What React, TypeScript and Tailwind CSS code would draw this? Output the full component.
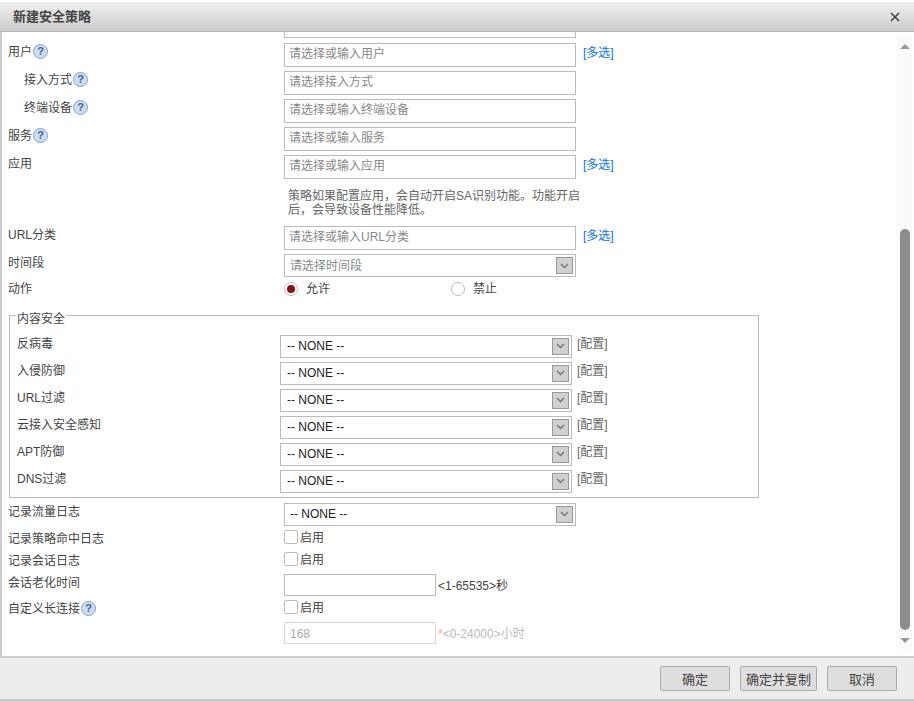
const FONT = { fontFamily: '"Liberation Sans", "Noto Sans CJK SC", sans-serif' }

function Help() {
  return (
    <span className="ml-px inline-flex h-[15px] w-[15px] shrink-0 items-center justify-center rounded-full border border-[#7ea6dc] bg-[#cfdcee] text-[11px] leading-none font-bold text-[#3c659c]">
      ?
    </span>
  )
}

function Chevron() {
  return (
    <span className="flex h-[17px] w-[17px] shrink-0 items-center justify-center border border-[#999] bg-[#d0d0d0]">
      <svg width="9" height="6" viewBox="0 0 9 6" fill="none">
        <path d="M1 1l3.5 3.5L8 1" stroke="#777" strokeWidth="1.5" />
      </svg>
    </span>
  )
}

function TextBox({ text }: { text: string }) {
  return (
    <div className="flex h-[24px] w-[292px] items-center border border-[#bbb] pb-[2px] pl-[4px] text-[12px] text-[#888]">
      {text}
    </div>
  )
}

function Select({ text, className }: { text: string; className: string }) {
  return (
    <div className={`flex h-[23px] w-[292px] items-center justify-between border border-[#bbb] pr-[2px] text-[12px] ${className}`}>
      <span>{text}</span>
      <Chevron />
    </div>
  )
}

function Label({ text, help, indent }: { text: string; help?: boolean; indent?: boolean }) {
  return (
    <div className={`flex h-[17px] w-[276px] shrink-0 items-center text-[12px] text-[#444] ${indent ? "pl-[16px]" : ""}`}>
      <span>{text}</span>
      {help && <Help />}
    </div>
  )
}

function More() {
  return <span className="ml-[7px] text-[12px] leading-[20px] text-[#0a6ff0]">[多选]</span>
}

function Check() {
  return (
    <div className="flex h-[14px] items-center text-[12px] text-[#444]">
      <span className="h-[14px] w-[14px] rounded-[2px] border border-[#bbb] bg-white" />
      <span className="mt-[2px] ml-[2px]">启用</span>
    </div>
  )
}

function Radio({ on, text }: { on?: boolean; text: string }) {
  return (
    <div className="flex items-center text-[12px] text-[#444]">
      <span className="flex h-[14px] w-[14px] items-center justify-center rounded-full border border-[#bbb] bg-white">
        {on && <span className="h-[8px] w-[8px] rounded-full bg-[#8f0f0f]" />}
      </span>
      <span className="ml-2">{text}</span>
    </div>
  )
}

const security = ["反病毒", "入侵防御", "URL过滤", "云接入安全感知", "APT防御", "DNS过滤"]

export default function App() {
  return (
    <div className="flex h-[702px] w-[914px] flex-col overflow-hidden bg-white" style={FONT}>
      <div className="mt-[2px] flex h-[30px] shrink-0 items-center justify-between border-b border-[#b5b5b5] bg-gradient-to-b from-[#f0f0f0] to-[#cccccc] pr-[14px] pl-[13px]">
        <span className="text-[13px] font-bold text-[#444]">新建安全策略</span>
        <svg width="10" height="10" viewBox="0 0 10 10" fill="none">
          <path d="M1 1l8 8M9 1l-8 8" stroke="#444" strokeWidth="1.6" />
        </svg>
      </div>

      <div className="flex h-[626px] shrink-0 border-b-2 border-l-2 border-[#cccccc]">
        <div className="min-w-0 flex-1 pl-[6px]">
          <div className="ml-[276px] h-[6px] w-[292px] border-x border-b border-[#bbb]" />
          <div className="mt-[5px] flex h-[28px]">
            <Label text="用户" help />
            <TextBox text="请选择或输入用户" />
            <More />
          </div>
          <div className="flex h-[28px]">
            <Label text="接入方式" help indent />
            <TextBox text="请选择接入方式" />
          </div>
          <div className="flex h-[28px]">
            <Label text="终端设备" help indent />
            <TextBox text="请选择或输入终端设备" />
          </div>
          <div className="flex h-[28px]">
            <Label text="服务" help />
            <TextBox text="请选择或输入服务" />
          </div>
          <div className="flex h-[28px]">
            <Label text="应用" />
            <TextBox text="请选择或输入应用" />
            <More />
          </div>
          <p className="mt-[6px] ml-[280px] h-[37px] w-[296px] text-[12px] leading-[14px] text-[#666]">
            策略如果配置应用，会自动开启SA识别功能。功能开启后，会导致设备性能降低。
          </p>
          <div className="flex h-[28px]">
            <Label text="URL分类" />
            <TextBox text="请选择或输入URL分类" />
            <More />
          </div>
          <div className="flex h-[26px]">
            <Label text="时间段" />
            <Select text="请选择时间段" className="pl-[5px] text-[#888]" />
          </div>
          <div className="flex h-[35px]">
            <Label text="动作" />
            <div className="flex h-[17px] items-center">
              <div className="w-[167px]">
                <Radio on text="允许" />
              </div>
              <Radio text="禁止" />
            </div>
          </div>

          <fieldset className="relative ml-[1px] h-[183px] w-[750px] border border-[#b9b9c9] pt-[19px] pl-[7px]">
            <legend className="absolute top-[-3px] left-[6px] bg-white px-px text-[12px] leading-[12px] text-[#444]">内容安全</legend>
            {security.map((name) => (
              <div key={name} className="flex h-[27px]">
                <div className="flex h-[17px] w-[263px] shrink-0 items-center text-[12px] text-[#444]">{name}</div>
                <Select text="-- NONE --" className="pb-px pl-[6px] text-[#222]" />
                <span className="ml-[5px] text-[12px] leading-[19px] text-[#666]">[配置]</span>
              </div>
            ))}
          </fieldset>

          <div className="mt-[5px] flex h-[27px]">
            <Label text="记录流量日志" />
            <Select text="-- NONE --" className="pb-px pl-[5px] text-[#222]" />
          </div>
          <div className="flex h-[22px]">
            <Label text="记录策略命中日志" />
            <Check />
          </div>
          <div className="flex h-[22px]">
            <Label text="记录会话日志" />
            <Check />
          </div>
          <div className="flex h-[26px]">
            <Label text="会话老化时间" />
            <div className="h-[22px] w-[152px] border border-[#bbb]" />
            <span className="ml-[2px] text-[12px] leading-[24px] text-[#444]">&lt;1-65535&gt;秒</span>
          </div>
          <div className="flex h-[22px]">
            <Label text="自定义长连接" help />
            <Check />
          </div>
          <div className="flex h-[22px]">
            <div className="w-[276px] shrink-0" />
            <div className="flex h-[22px] w-[152px] items-center border border-[#d8d8d8] pt-px pl-[5px] text-[12px] text-[#aaa]">168</div>
            <span className="ml-[2px] text-[12px] leading-[24px] text-[#bbb]">
              <span className="text-[#f99]">*</span>&lt;0-24000&gt;小时
            </span>
          </div>
        </div>

        <div className="mt-[3px] mr-[2px] mb-[7px] flex w-[15px] shrink-0 flex-col items-center bg-[#fafafa]">
          <span className="mt-[9px] h-0 w-0 border-x-[5px] border-b-[5px] border-x-transparent border-b-[#999]" />
          <span className="mt-[180px] h-[401px] w-[10px] rounded-[5px] bg-[#8d8d8d]" />
          <span className="mt-[8px] h-0 w-0 border-x-[5px] border-t-[5px] border-x-transparent border-t-[#999]" />
        </div>
      </div>

      <div className="flex h-[41px] shrink-0 items-start justify-end bg-[#ededed] pt-[8px] pr-[17px]">
        <button className="h-[25px] w-[70px] rounded-[2px] border border-[#aaa] bg-[#dedede] pt-[2px] text-[13px] text-[#444]">确定</button>
        <button className="ml-[10px] h-[25px] w-[77px] rounded-[2px] border border-[#aaa] bg-[#dedede] pt-[2px] text-[13px] text-[#444]">确定并复制</button>
        <button className="ml-[10px] h-[25px] w-[70px] rounded-[2px] border border-[#aaa] bg-[#dedede] pt-[2px] text-[13px] text-[#444]">取消</button>
      </div>
      <div className="h-[3px] shrink-0 bg-[#cccccc]" />
    </div>
  )
}
